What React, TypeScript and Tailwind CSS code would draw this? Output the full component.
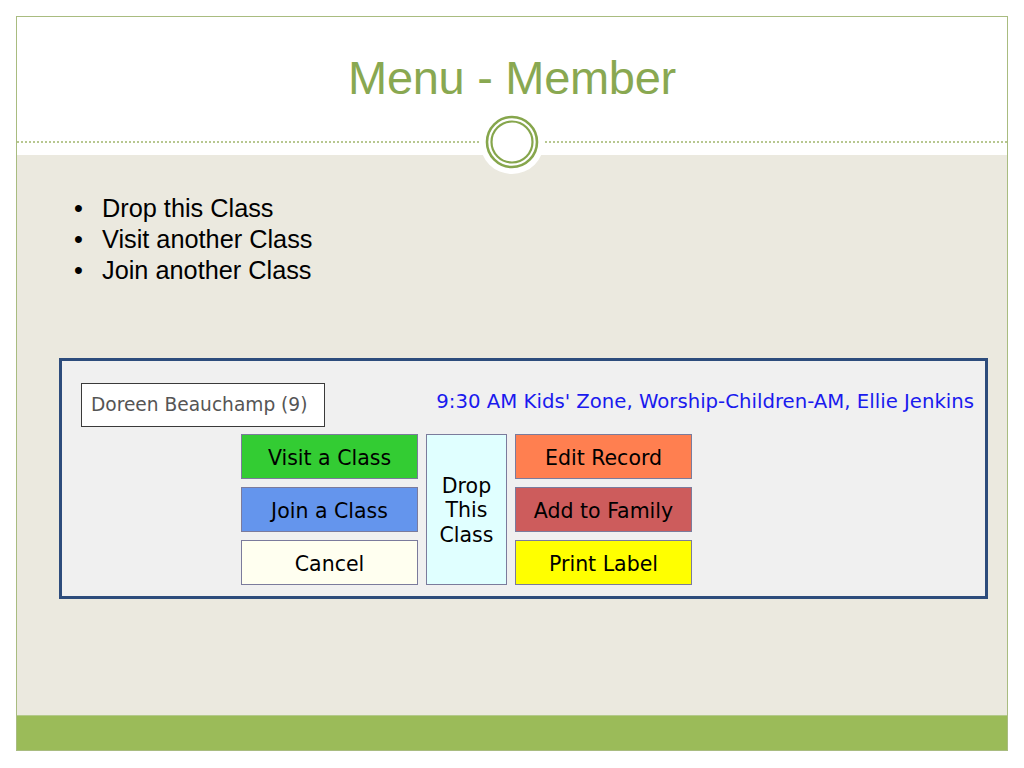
import React from "react";

const btn =
  "flex items-center justify-center border border-[#7b7b9c] text-[20.5px] text-black pt-[3px]";

export default function App() {
  return (
    <div className="w-[1024px] h-[768px] bg-white pt-[16px] pl-[16px]">
      <div className="relative w-[992px] h-[735px] border border-[#a9bc80] flex flex-col">
        {/* header */}
        <div className="h-[138px] bg-white pt-[37px] flex justify-center">
          <h1
            className="text-[47px] leading-none text-[#89a851] tracking-[-0.3px]"
            style={{ fontFamily: '"Liberation Sans", Arial, sans-serif' }}
          >
            Menu - Member
          </h1>
        </div>

        {/* decorative divider */}
        <div className="absolute left-0 right-0 top-[124px] border-t-2 border-dotted border-[#b7c790]" />
        <div className="absolute left-[463px] top-[93px] w-[64px] h-[64px] rounded-full bg-white flex items-center justify-center">
          <svg width="56" height="56" viewBox="0 0 56 56">
            <circle cx="28" cy="28" r="25" fill="none" stroke="#86a64c" strokeWidth="2.6" />
            <circle cx="28" cy="28" r="20.5" fill="none" stroke="#86a64c" strokeWidth="2.2" />
          </svg>
        </div>

        {/* content */}
        <div
          className="flex-1 bg-[#ebe9df] pt-[38px]"
          style={{ fontFamily: '"Liberation Sans", Arial, sans-serif' }}
        >
          <ul className="pl-[57px] text-[25.3px] leading-[31px] text-black">
            {["Drop this Class", "Visit another Class", "Join another Class"].map((t) => (
              <li key={t} className="flex">
                <span className="w-[28px]">•</span>
                <span>{t}</span>
              </li>
            ))}
          </ul>

          {/* dialog */}
          <div
            className="ml-[42px] mt-[72px] w-[929px] h-[241px] border-[3px] border-[#2d4c7c] bg-[#f0f0f0] pl-[19px] pr-[11px] pt-[22px]"
            style={{ fontFamily: '"DejaVu Sans", Verdana, sans-serif' }}
          >
            <div className="flex justify-between items-start">
              <div className="w-[244px] h-[44px] border border-[#3a3a3a] bg-white flex items-center pl-[9px] text-[18.6px] text-[#555555]">
                Doreen Beauchamp (9)
              </div>
              <div className="mt-[9px] text-[19.7px] text-[#1a1aee] leading-none">
                9:30 AM Kids' Zone, Worship-Children-AM, Ellie Jenkins
              </div>
            </div>

            <div className="ml-[160px] mt-[7px] grid grid-cols-[177px_81px_177px] grid-rows-[45px_45px_45px] gap-x-[8px] gap-y-[8px]">
              <div className={`${btn} bg-[#33cc33]`}>Visit a Class</div>
              <div className="row-span-3 flex flex-col items-center justify-center border border-[#7b7b9c] bg-[#e0ffff] text-[20.5px] text-black pt-[2px]">
                <span className="block leading-[24.5px]">Drop</span>
                <span className="block leading-[24.5px]">This</span>
                <span className="block leading-[24.5px]">Class</span>
              </div>
              <div className={`${btn} bg-[#ff7f50]`}>Edit Record</div>
              <div className={`${btn} bg-[#6495ed]`}>Join a Class</div>
              <div className={`${btn} bg-[#cd5c5c]`}>Add to Family</div>
              <div className={`${btn} bg-[#fffff0]`}>Cancel</div>
              <div className={`${btn} bg-[#ffff00]`}>Print Label</div>
            </div>
          </div>
        </div>

        {/* footer */}
        <div className="h-[35px] bg-[#9bbb59] border-t border-[#b3c98a]" />
      </div>
    </div>
  );
}
